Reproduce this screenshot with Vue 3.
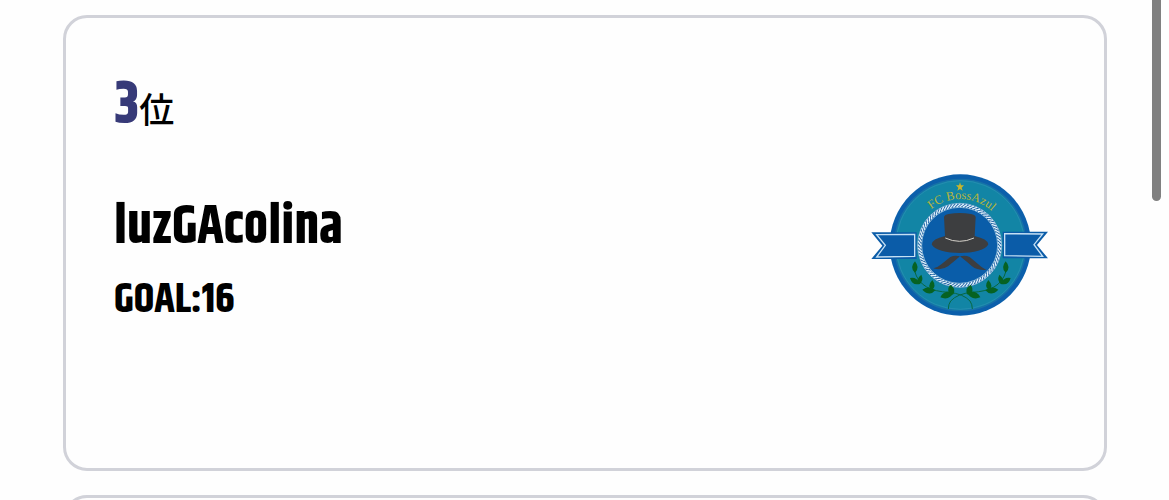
<script setup>
import { ref } from 'vue'

const ranking = ref([
  { rank: 3, name: 'luzGAcolina', goal: 16 },
  { rank: 4, name: '', goal: null },
])

// strands of the rope around the hat
const strands = Array.from({ length: 76 }, (_, i) => {
  const a = (i / 76) * Math.PI * 2
  const b = a + 0.1
  return {
    x1: 299 + 115 * Math.cos(a),
    y1: 241 + 115 * Math.sin(a),
    x2: 299 + 125 * Math.cos(b),
    y2: 241 + 125 * Math.sin(b),
  }
})
</script>

<template>
  <main class="page">
    <ul class="ranking">
      <li v-for="player in ranking" :key="player.rank" class="card">
        <template v-if="player.name">
          <div class="info">
            <p class="rank"><span class="number">{{ player.rank }}</span>位</p>
            <h2 class="name">{{ player.name }}</h2>
            <p class="goal">GOAL:{{ player.goal }}</p>
          </div>
          <svg class="emblem" viewBox="30 24 540 432" role="img" aria-label="FC BossAzul">
            <defs>
              <path id="nameArc" d="M160 243A141 141 0 0 1 442 243" />
              <g id="ribbon">
                <path d="M34 202H170V282H34L67 242Z" fill="#0b5ca8" />
                <path d="M50 209L164 208V274L50 276L76 241Z" fill="#0b5ca8" stroke="#c5e0f4" stroke-width="4" />
              </g>
              <g id="laurel">
                <path d="M164 318Q172 350 200 366Q226 380 266 382Q310 386 330 408Q337 418 337 432" fill="none" stroke="#08683f" stroke-width="3" />
                <g fill="#066222">
                  <path d="M165 289Q181 309 165 323Q147 309 165 289Z" />
                  <path d="M150 339Q168 334 181 356Q157 364 150 339Z" />
                  <path d="M184 329Q193 348 177 358Q165 344 184 329Z" />
                  <path d="M187 374Q207 360 226 376Q209 396 187 374Z" />
                  <path d="M217 345Q231 363 215 376Q200 363 217 345Z" />
                  <path d="M241 397Q250 375 282 381Q268 408 241 397Z" />
                  <path d="M270 359Q290 369 279 389Q255 381 270 359Z" />
                </g>
              </g>
            </defs>
            <circle cx="301" cy="240" r="212" fill="#0b5fab" />
            <circle cx="301" cy="240" r="197" fill="#1285a5" stroke="#176fa8" stroke-width="4" />
            <circle cx="301" cy="240" r="193" fill="none" stroke="#2e91b5" stroke-width="2" />
            <use href="#ribbon" />
            <use href="#ribbon" transform="matrix(-1 0 0 1 598 -2)" />
            <circle cx="299" cy="241" r="120" fill="#0a5da9" stroke="#155b9f" stroke-width="14" />
            <g stroke="#e4f3fc" stroke-width="4">
              <line v-for="(s, i) in strands" :key="i" :x1="s.x1" :y1="s.y1" :x2="s.x2" :y2="s.y2" />
            </g>
            <circle cx="299" cy="241" r="126" fill="none" stroke="#b9dcef" stroke-width="2" />
            <circle cx="299" cy="241" r="114" fill="none" stroke="#b9dcef" stroke-width="2" />
            <g fill="#3d3e40">
              <path d="M252 156Q254 149 266 147Q299 141 333 147Q345 149 347 156L344 213Q383 222 385 238C372 273 228 273 215 238Q217 222 255 213Z" />
              <path d="M300 274Q284 270 271 276L244 298Q233 308 220 310Q244 318 264 304Q284 288 300 274Z" />
              <path d="M300 274Q316 270 329 276L354 297Q365 308 379 315Q352 317 336 304Q318 288 300 274Z" />
            </g>
            <path d="M256 219Q298 239 342 219" fill="none" stroke="#d5d1ca" stroke-width="3" />
            <path d="M300 52L303 61L312 61L305 68L308 77L300 72L292 77L295 68L288 61L297 61Z" fill="#c8b52c" />
            <text class="clubName"><textPath href="#nameArc" startOffset="51%" text-anchor="middle">FC BossAzul</textPath></text>
            <use href="#laurel" />
            <use href="#laurel" transform="matrix(-1 0 0 1 602 0)" />
          </svg>
        </template>
      </li>
    </ul>
    <div class="scrollThumb" aria-hidden="true"></div>
  </main>
</template>

<style>
body {
  background: #fefefe;
}
</style>

<style scoped>
.page {
  position: relative;
  box-sizing: border-box;
  height: 100vh;
  overflow: hidden;
  padding: 15px 62px 0 63px;
  color: #000;
  font-family: "Khand", "Liberation Sans Narrow", "Roboto Condensed", "Noto Sans CJK JP", sans-serif;
}

.ranking {
  display: flex;
  flex-direction: column;
  gap: 24px;
  margin: 0;
  padding: 0;
  list-style: none;
}

.card {
  display: flex;
  justify-content: space-between;
  align-items: center;
  box-sizing: border-box;
  min-height: 456px;
  padding: 52px 54px 48px 48px;
  border: 3px solid #d1d2d9;
  border-radius: 24px;
}

.info {
  align-self: flex-start;
}

.rank,
.name,
.goal {
  margin: 0;
}

.rank {
  font-family: "Noto Sans CJK JP", sans-serif;
  font-size: 35px;
  font-weight: 500;
  line-height: 72px;
}

.number {
  color: #373a78;
  font-family: "Khand", "Liberation Sans Narrow", "Roboto Condensed", sans-serif;
  font-size: 60px;
  font-weight: 700;
}

.name {
  margin-top: 42px;
  font-size: 54px;
  font-weight: 700;
  line-height: 84px;
}

.goal {
  font-size: 42px;
  font-weight: 700;
  line-height: 60px;
}

.emblem {
  width: 180px;
  height: 144px;
  flex-shrink: 0;
}

.clubName {
  fill: #b9b53a;
  font-family: "Liberation Serif", serif;
  font-size: 37px;
}

.scrollThumb {
  position: absolute;
  top: 0;
  right: 8px;
  width: 9px;
  height: 201px;
  border-radius: 0 0 5px 5px;
  background: #808080;
}
</style>
